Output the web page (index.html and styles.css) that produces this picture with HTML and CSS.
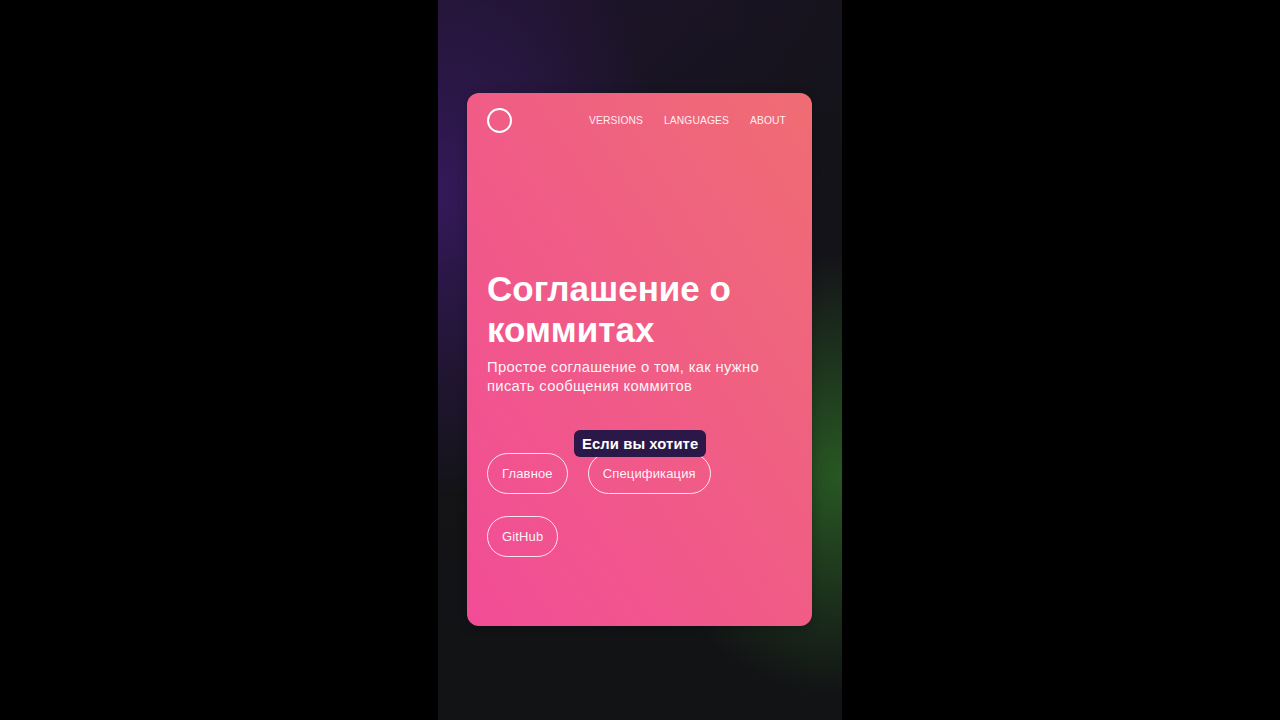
FILE: index.html
```html
<!DOCTYPE html>
<html lang="ru">
<head>
<meta charset="utf-8">
<title>Соглашение о коммитах</title>
<link rel="stylesheet" href="styles.css">
</head>
<body>
<div class="frame">
  <div class="card">
    <header class="top">
      <span class="logo"></span>
      <nav class="nav">
        <a>VERSIONS</a>
        <a>LANGUAGES</a>
        <a>ABOUT</a>
      </nav>
    </header>
    <section class="hero">
      <h1 class="title">Соглашение о коммитах</h1>
      <p class="sub">Простое соглашение о том, как нужно писать сообщения коммитов</p>
    </section>
    <div class="buttons">
      <span class="tip">Если вы хотите</span>
      <a class="pill">Главное</a>
      <a class="pill">Спецификация</a>
      <a class="pill">GitHub</a>
    </div>
  </div>
</div>
</body>
</html>
```
FILE: styles.css
```css
* { box-sizing: border-box; }
html, body { margin: 0; height: 100%; }
body {
  background: #000;
  display: flex;
  justify-content: center;
  font-family: "Liberation Sans", Arial, sans-serif;
  color: #fff;
}
.frame {
  width: 404px;
  height: 720px;
  padding: 93px 30px 0 29px;
  background:
    radial-gradient(ellipse 230px 300px at 0% 27%, rgba(60, 26, 105, 0.8), rgba(60, 26, 105, 0) 100%),
    radial-gradient(ellipse 340px 200px at 25% 0%, rgba(45, 22, 75, 0.3), rgba(45, 22, 75, 0) 100%),
    radial-gradient(ellipse 200px 220px at 100% 66%, rgba(42, 95, 36, 0.9), rgba(42, 95, 36, 0) 100%),
    linear-gradient(180deg, #16131c 0%, #141318 50%, #121315 100%);
}
.card {
  width: 345px;
  height: 533px;
  border-radius: 12px;
  background: linear-gradient(to bottom left, #ef6d73 0%, #f05e84 45%, #f24c97 100%);
  padding: 15px 26px 0 20px;
  box-shadow: 0 2px 10px rgba(0, 0, 0, 0.25);
}
.top {
  display: flex;
  align-items: center;
  justify-content: space-between;
  height: 24px;
}
.logo {
  width: 25px;
  height: 25px;
  border: 2px solid #fff;
  border-radius: 50%;
}
.nav {
  display: flex;
  gap: 21px;
  font-size: 10.3px;
  letter-spacing: 0.1px;
  color: rgba(255, 255, 255, 0.92);
}
.hero { margin-top: 136px; }
.title {
  margin: 0;
  font-size: 35px;
  line-height: 41px;
  font-weight: 700;
}
.sub {
  margin: 8px 0 0;
  font-size: 14.8px;
  line-height: 19px;
  letter-spacing: 0.3px;
  color: rgba(255, 255, 255, 0.95);
  max-width: 300px;
}
.buttons {
  position: relative;
  margin-top: 57px;
  display: flex;
  flex-wrap: wrap;
  column-gap: 20px;
  row-gap: 22px;
  width: 280px;
}
.pill {
  height: 41px;
  padding: 0 14px;
  border: 1px solid rgba(255, 255, 255, 0.85);
  border-radius: 21px;
  display: flex;
  align-items: center;
  font-size: 13px;
  letter-spacing: 0.15px;
  color: rgba(255, 255, 255, 0.95);
}
.tip {
  position: absolute;
  left: 87px;
  top: -23px;
  height: 27px;
  padding: 0 8px;
  border-radius: 6px;
  background: #2b1849;
  display: flex;
  align-items: center;
  font-size: 14.8px;
  font-weight: 700;
  letter-spacing: 0.1px;
  color: #fff;
  z-index: 2;
}
```
